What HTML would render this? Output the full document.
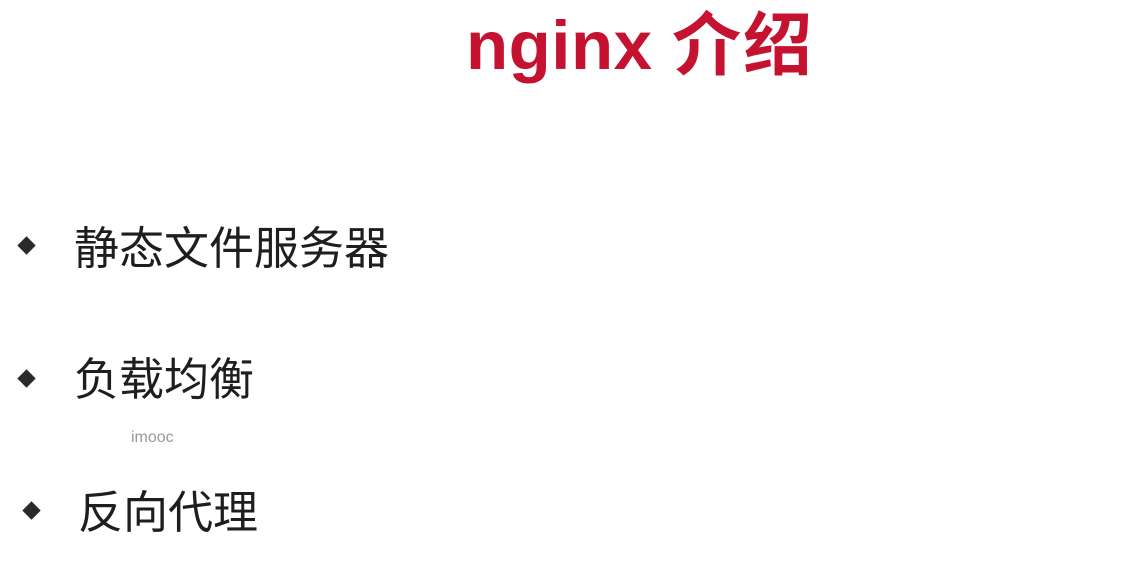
<!DOCTYPE html>
<html><head><meta charset="utf-8"><style>
body{margin:0;width:1127px;height:567px;background:#fff;position:relative;overflow:hidden;font-family:"Liberation Sans","Noto Sans CJK SC",sans-serif}
.t{position:absolute;left:466px;top:1px;font-size:69px;font-weight:bold;color:#c41230;line-height:90px;white-space:nowrap;letter-spacing:0.5px}
.t span{letter-spacing:2px}
.i{position:absolute;font-size:45px;color:#1e1e1e;line-height:50px;white-space:nowrap}
.d{position:absolute;width:13px;height:13px;background:#2a2a2a;transform:rotate(45deg)}
.w{position:absolute;left:131px;top:429px;font-size:16px;color:#999}
</style></head><body>
<div class="t">nginx <span>介绍</span></div>
<div class="d" style="left:20px;top:239px"></div>
<div class="i" style="left:74px;top:224px">静态文件服务器</div>
<div class="d" style="left:20px;top:372px"></div>
<div class="i" style="left:74px;top:355px">负载均衡</div>
<div class="w">imooc</div>
<div class="d" style="left:25px;top:504px"></div>
<div class="i" style="left:78px;top:488px">反向代理</div>
</body></html>
